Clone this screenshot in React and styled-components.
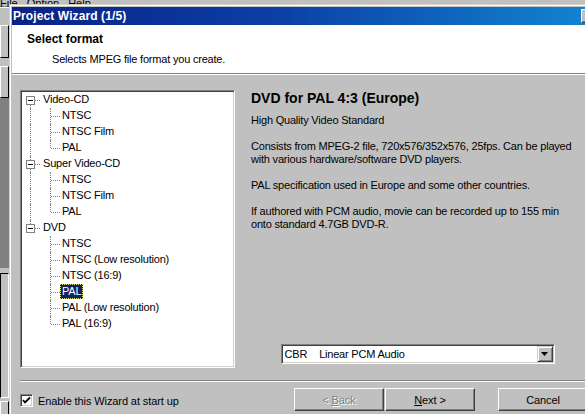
import React from 'react';
import styled, { createGlobalStyle } from 'styled-components';

const GlobalStyle = createGlobalStyle`
  html, body { margin: 0; padding: 0; background: #c0c0c0; overflow: hidden; }
  body { font-family: "Liberation Sans", Arial, sans-serif; }
`;

const Screen = styled.div`
  position: relative;
  width: 585px;
  height: 414px;
  overflow: hidden;
  background: #c0c0c0;
  font-family: "Liberation Sans", Arial, sans-serif;
  font-size: 11px;
  color: #000;
`;

/* ---------- background application ---------- */
const BackApp = styled.div`
  display: flex;
  flex-direction: column;
  height: 100%;
`;

const MenuBar = styled.div`
  display: flex;
  gap: 9px;
  height: 8px;
  line-height: 11px;
  margin-top: -2px;
  overflow: visible;
  border-bottom: 1px solid #808080;
  box-shadow: 0 1px 0 #fff;
`;

const MenuItem = styled.span`
  white-space: nowrap;
`;

const SidePane = styled.div`
  width: 9px;
  display: flex;
  flex-direction: column;
  padding-top: 18px;
`;

const SideBlock = styled.div`
  height: ${p => p.$h}px;
  margin-bottom: ${p => p.$gap || 0}px;
  box-sizing: border-box;
  background: ${p => p.$dark ? '#808080' : '#c0c0c0'};
  border: ${p => p.$dark ? 'none' : '1px solid'};
  border-color: ${p => p.$sunken ? '#000 #fff #fff #000' : '#fff #000 #000 #fff'};
`;

/* ---------- dialog window ---------- */
const Dialog = styled.div`
  position: absolute;
  left: 9px;
  top: 4px;
  width: 593px;
  height: 426px;
  box-sizing: border-box;
  background: #c0c0c0;
  border: 1px solid;
  border-color: #d4d0c8 #404040 #404040 #d4d0c8;
  box-shadow: inset 1px 1px #fff, inset -1px -1px #808080;
  padding: 2px;
  display: flex;
  flex-direction: column;
`;

const TitleBar = styled.div`
  height: 18px;
  flex: none;
  display: flex;
  align-items: center;
  padding-left: 1px;
  background: linear-gradient(to right, #0a2286 0%, #0b3fa6 45%, #1286d2 100%);
  color: #fff;
  font-weight: bold;
  font-size: 12px;
  letter-spacing: 0.1px;
`;

const TitleText = styled.span`
  flex: 1;
  white-space: nowrap;
`;

const TitleButton = styled.div`
  width: 16px;
  height: 14px;
  margin-right: 2px;
  box-sizing: border-box;
  background: #c0c0c0;
  border: 1px solid;
  border-color: #fff #404040 #404040 #fff;
  box-shadow: inset -1px -1px #808080;
`;

const Header = styled.div`
  height: 48px;
  flex: none;
  box-sizing: border-box;
  background: #fff;
  padding: 8px 0 0 15px;
`;

const HeaderTitle = styled.div`
  font-weight: bold;
  font-size: 12px;
  line-height: 13px;
`;

const HeaderSub = styled.div`
  margin: 7px 0 0 25px;
  line-height: 13px;
  letter-spacing: -0.2px;
`;

const Rule = styled.div`
  flex: none;
  border-top: 1px solid #808080;
  border-bottom: 1px solid #fff;
  margin: ${p => p.$margin || '0'};
`;

const Body = styled.div`
  display: flex;
  padding: 15px 0 0 8px;
`;

/* ---------- tree ---------- */
const TreeBox = styled.div`
  width: 215px;
  height: 278px;
  flex: none;
  box-sizing: border-box;
  background: #fff;
  border: 1px solid;
  border-color: #808080 #fff #fff #808080;
  box-shadow: inset 1px 1px #404040, inset -1px -1px #d4d0c8;
  padding: 1px;
  letter-spacing: -0.2px;
`;

const TreeRow = styled.div`
  display: flex;
  height: 16px;
`;

const Guide = styled.div`
  position: relative;
  flex: none;
  width: ${p => p.$w}px;

  &::before {
    content: '';
    display: ${p => (p.$up || p.$down) ? 'block' : 'none'};
    position: absolute;
    left: ${p => p.$x}px;
    top: ${p => p.$up ? 0 : 8}px;
    bottom: ${p => p.$down ? 0 : 8}px;
    border-left: 1px dotted #808080;
  }

  &::after {
    content: '';
    display: ${p => p.$right ? 'block' : 'none'};
    position: absolute;
    left: ${p => p.$x + 1}px;
    right: 0;
    top: 8px;
    border-top: 1px dotted #808080;
  }
`;

const Expander = styled.div`
  position: absolute;
  z-index: 1;
  left: ${p => p.$x - 4}px;
  top: 4px;
  width: 9px;
  height: 9px;
  box-sizing: border-box;
  background: #fff;
  border: 1px solid #808080;

  &::after {
    content: '';
    position: absolute;
    left: 1px;
    top: 3px;
    width: 5px;
    height: 1px;
    background: #000;
  }
`;

const Label = styled.span`
  align-self: flex-start;
  height: 15px;
  line-height: 15px;
  padding: 0 2px;
  margin-left: ${p => p.$root ? 1 : 0}px;
  white-space: nowrap;
  box-sizing: border-box;
  background: ${p => p.$selected ? '#0a246a' : 'transparent'};
  color: ${p => p.$selected ? '#fff' : '#000'};
  outline: ${p => p.$selected ? '1px dotted #e8e080' : 'none'};
  outline-offset: -1px;
`;

/* ---------- info panel ---------- */
const Info = styled.div`
  flex: 1;
  display: flex;
  flex-direction: column;
  margin-left: 16px;
  padding-right: 15px;
  height: 274px;
`;

const InfoTitle = styled.div`
  font-weight: bold;
  font-size: 14px;
  line-height: 16px;
  white-space: nowrap;
`;

const InfoText = styled.div`
  margin-top: 8px;
  line-height: 13px;
  white-space: nowrap;
  letter-spacing: -0.2px;
`;

const Para = styled.p`
  margin: 0 0 13px 0;
`;

const Combo = styled.div`
  margin-top: auto;
  align-self: center;
  width: 274px;
  height: 20px;
  box-sizing: border-box;
  display: flex;
  align-items: center;
  background: #fff;
  border: 1px solid;
  border-color: #808080 #fff #fff #808080;
  box-shadow: inset 1px 1px #404040, inset -1px -1px #d4d0c8;
  padding: 1px 1px 1px 3px;
  letter-spacing: -0.2px;
`;

const ComboText = styled.span`
  flex: 1;
  white-space: nowrap;
`;

const ComboGap = styled.span`
  display: inline-block;
  width: 12px;
`;

const DropButton = styled.div`
  width: 16px;
  height: 16px;
  box-sizing: border-box;
  display: flex;
  align-items: center;
  justify-content: center;
  background: #c0c0c0;
  border: 1px solid;
  border-color: #d4d0c8 #404040 #404040 #d4d0c8;
  box-shadow: inset 1px 1px #fff, inset -1px -1px #808080;
`;

/* ---------- footer ---------- */
const Footer = styled.div`
  display: flex;
  align-items: center;
  margin-top: 6px;
  padding: 0 11px 0 8px;
`;

const CheckLabel = styled.label`
  display: flex;
  align-items: center;
  gap: 5px;
  margin-top: 2px;
  letter-spacing: -0.1px;
`;

const CheckBox = styled.span`
  width: 13px;
  height: 13px;
  box-sizing: border-box;
  display: flex;
  align-items: center;
  justify-content: center;
  background: #fff;
  border: 1px solid;
  border-color: #808080 #fff #fff #808080;
  box-shadow: inset 1px 1px #404040, inset -1px -1px #d4d0c8;
`;

const Buttons = styled.div`
  margin-left: auto;
  display: flex;
`;

const Button = styled.div`
  width: 90px;
  height: 23px;
  box-sizing: border-box;
  display: flex;
  align-items: center;
  justify-content: center;
  margin-left: ${p => p.$gap || 0}px;
  background: #c0c0c0;
  border: 1px solid;
  border-color: #fff #404040 #404040 #fff;
  box-shadow: inset -1px -1px #808080;
  color: ${p => p.$disabled ? '#808080' : '#000'};
  text-shadow: ${p => p.$disabled ? '1px 1px 0 #fff' : 'none'};
  letter-spacing: -0.1px;
  white-space: pre;
`;

const tree = [
  { label: 'Video-CD', children: ['NTSC', 'NTSC Film', 'PAL'] },
  { label: 'Super Video-CD', children: ['NTSC', 'NTSC Film', 'PAL'] },
  {
    label: 'DVD',
    children: ['NTSC', 'NTSC (Low resolution)', 'NTSC (16:9)', 'PAL', 'PAL (Low resolution)', 'PAL (16:9)'],
    selected: 3,
  },
];

function Tree() {
  const rows = [];
  tree.forEach((node, i) => {
    const first = i === 0;
    const last = i === tree.length - 1;
    rows.push(
      <TreeRow key={`r${i}`}>
        <Guide $w={18} $x={8} $up={!first} $down={!last} $right>
          <Expander $x={8} />
        </Guide>
        <Label $root>{node.label}</Label>
      </TreeRow>
    );
    node.children.forEach((c, j) => {
      const lastChild = j === node.children.length - 1;
      rows.push(
        <TreeRow key={`r${i}c${j}`}>
          <Guide $w={18} $x={8} $up={!last} $down={!last} />
          <Guide $w={20} $x={10} $up $down={!lastChild} $right />
          <Label $selected={node.selected === j}>{c}</Label>
        </TreeRow>
      );
    });
  });
  return <TreeBox>{rows}</TreeBox>;
}

export default function App() {
  return (
    <Screen>
      <GlobalStyle />
      <BackApp>
        <MenuBar>
          <MenuItem>File</MenuItem>
          <MenuItem>Option</MenuItem>
          <MenuItem>Help</MenuItem>
        </MenuBar>
        <SidePane>
          <SideBlock $h={33} $gap={8} />
          <SideBlock $h={32} />
          <SideBlock $h={170} $gap={5} $dark />
          <SideBlock $h={125} $gap={3} $sunken />
          <SideBlock $h={20} />
        </SidePane>
      </BackApp>

      <Dialog>
        <TitleBar>
          <TitleText>Project Wizard (1/5)</TitleText>
          <TitleButton />
        </TitleBar>
        <Header>
          <HeaderTitle>Select format</HeaderTitle>
          <HeaderSub>Selects MPEG file format you create.</HeaderSub>
        </Header>
        <Rule />
        <Body>
          <Tree />
          <Info>
            <InfoTitle>DVD for PAL 4:3 (Europe)</InfoTitle>
            <InfoText>
              <Para>High Quality Video Standard</Para>
              <Para>
                Consists from MPEG-2 file, 720x576/352x576, 25fps. Can be played
                <br />
                with various hardware/software DVD players.
              </Para>
              <Para>PAL specification used in Europe and some other countries.</Para>
              <Para>
                If authored with PCM audio, movie can be recorded up to 155 min
                <br />
                onto standard 4.7GB DVD-R.
              </Para>
            </InfoText>
            <Combo>
              <ComboText>
                CBR<ComboGap />Linear PCM Audio
              </ComboText>
              <DropButton>
                <svg width="7" height="4" viewBox="0 0 7 4">
                  <polygon points="0,0 7,0 3.5,4" fill="#000" />
                </svg>
              </DropButton>
            </Combo>
          </Info>
        </Body>
        <Rule $margin="12px 8px 0 8px" />
        <Footer>
          <CheckLabel>
            <CheckBox>
              <svg width="9" height="9" viewBox="0 0 9 9">
                <polyline points="1,4 3,6.5 8,1.5" fill="none" stroke="#000" strokeWidth="1.8" />
              </svg>
            </CheckBox>
            Enable this Wizard at start up
          </CheckLabel>
          <Buttons>
            <Button $disabled>{'< '}<u>B</u>ack</Button>
            <Button $gap={1}><u>N</u>ext{' >'}</Button>
            <Button $gap={23}>Cancel</Button>
          </Buttons>
        </Footer>
      </Dialog>
    </Screen>
  );
}
